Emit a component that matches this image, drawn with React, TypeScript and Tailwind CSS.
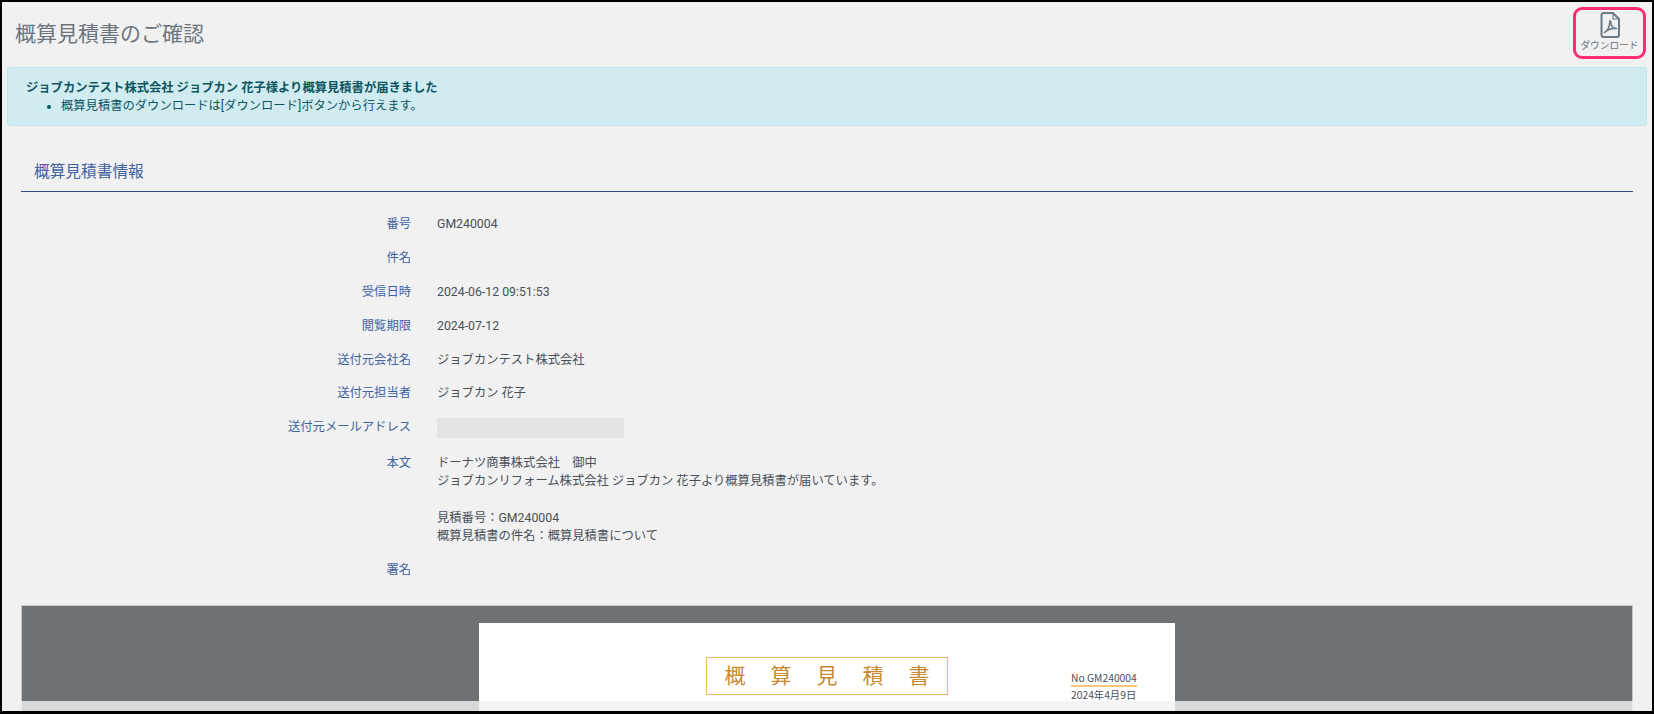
const rows = [
  { label: "番号", value: "GM240004" },
  { label: "件名", value: "" },
  { label: "受信日時", value: "2024-06-12 09:51:53" },
  { label: "閲覧期限", value: "2024-07-12" },
  { label: "送付元会社名", value: "ジョブカンテスト株式会社" },
  { label: "送付元担当者", value: "ジョブカン 花子" },
];

const PdfIcon = () => (
  <svg width="20" height="26" viewBox="0 0 20 26" fill="none" stroke="#6c7a86" strokeWidth="2" strokeLinejoin="round" strokeLinecap="round">
    <path d="M3.500 1h9.500l6 6v16a2 2 0 0 1-2 2H3.500a2 2 0 0 1-2-2V3a2 2 0 0 1 2-2z" />
    <path d="M13 1v6h6" strokeWidth="1.200" />
    <path d="M4.500 20.500c2.800-1.600 5-5.500 5.300-10.500-.2-1.600 1-1.600.9 0 .1 3.300 2.300 6 5.800 6.500-3.300-.3-8.500.5-12 4z" strokeWidth="1.500" />
  </svg>
);

export default function App() {
  return (
    <div className="relative h-[714px] overflow-hidden border-2 border-b-[3px] border-black bg-[#f1f1f1] font-['Roboto','Noto_Sans_CJK_JP',sans-serif] text-[12.300px] leading-[18.300px] text-[#495057]">
      <div className="flex h-[65px] items-start justify-between pl-[13px] pr-[6px] pt-[5px]">
        <h1 className="mt-[12px] text-[21px] leading-[30px] text-[#6c757d]">概算見積書のご確認</h1>
        <button className="flex h-[52px] w-[73px] flex-col items-center rounded-[9px] border-[3px] border-[#ff2d78] pt-[2px] text-[9.700px] leading-[14px] text-[#6c757d]">
          <PdfIcon />
          <span className="mt-[1px] whitespace-nowrap">ダウンロード</span>
        </button>
      </div>

      <div className="mx-[5px] h-[59px] rounded-[3px] border border-[#bee5eb] bg-[#d1ecf1] px-[18px] py-[11px] text-[#0c5460]">
        <p className="font-bold">ジョブカンテスト株式会社 ジョブカン 花子様より概算見積書が届きました</p>
        <ul className="list-disc pl-[35px]">
          <li>概算見積書のダウンロードは[ダウンロード]ボタンから行えます。</li>
        </ul>
      </div>

      <div className="mx-[19px] mt-[33px] border-b border-[#2f4f86] px-[13px] pb-[6px] text-[15.700px] leading-[26px] text-[#3f62a0]">
        概算見積書情報
      </div>

      <div className="mt-[23px] flex flex-col gap-[15.600px] pb-[26px]">
        {rows.map((row) => (
          <div key={row.label} className="flex">
            <div className="w-[409px] shrink-0 text-right text-[#3f62a0]">{row.label}</div>
            <div className="ml-[26px] min-h-[18.300px]">{row.value}</div>
          </div>
        ))}
        <div className="flex">
          <div className="w-[409px] shrink-0 text-right text-[#3f62a0]">送付元メールアドレス</div>
          <div className="ml-[26px] h-[20px] w-[187px] bg-[#e4e4e4]" />
        </div>
        <div className="flex">
          <div className="w-[409px] shrink-0 text-right text-[#3f62a0]">本文</div>
          <div className="ml-[26px]">
            <p>ドーナツ商事株式会社　御中</p>
            <p>ジョブカンリフォーム株式会社 ジョブカン 花子より概算見積書が届いています。</p>
            <p className="h-[18.300px]" />
            <p>見積番号：GM240004</p>
            <p>概算見積書の件名：概算見積書について</p>
          </div>
        </div>
        <div className="flex">
          <div className="w-[409px] shrink-0 text-right text-[#3f62a0]">署名</div>
        </div>
      </div>

      <div className="mx-[19px] flex h-[200px] justify-center border border-[#c4c6c8] bg-[#6f7274] pt-[17px]">
        <div className="relative h-[200px] w-[696px] bg-white text-[#495057]">
          <div className="absolute left-[227px] top-[34px] flex h-[38px] w-[242px] items-center justify-center gap-[25px] border border-[#f6b75c] text-[21px] text-[#c98a2e]">
            <span>概</span>
            <span>算</span>
            <span>見</span>
            <span>積</span>
            <span>書</span>
          </div>
          <div className="absolute left-[592px] top-[48px] font-['Noto_Sans_CJK_JP',sans-serif] text-[10.300px] leading-[14px]">
            <div className="border-b-2 border-[#f9c87c]">No GM240004</div>
            <div className="mt-px">2024年4月9日</div>
          </div>
        </div>
      </div>

      <div className="absolute inset-x-0 bottom-0 h-[10px] bg-[#f1f1f1]/80" />
    </div>
  );
}
